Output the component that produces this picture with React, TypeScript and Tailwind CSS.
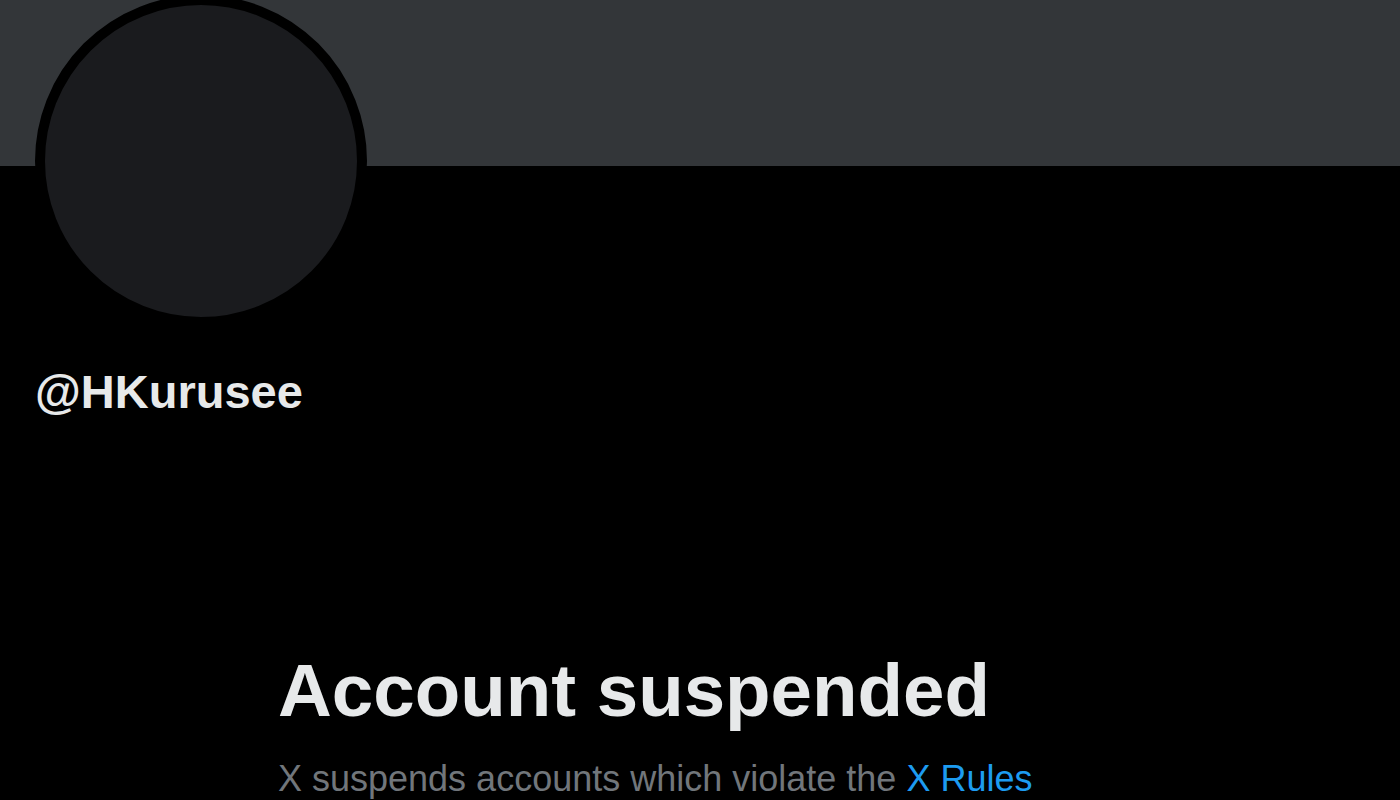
export default function App() {
  return (
    <div className="w-[1400px] h-[800px] overflow-hidden bg-black font-['Liberation_Sans',Arial,sans-serif]">
      <div className="h-[166px] bg-[#333639]" />
      <div className="pl-[35px]">
        <div className="-mt-[171px] w-[332px] h-[332px] rounded-full border-[10px] border-black bg-[#1a1b1e]" />
        <div className="mt-[41px] leading-none text-[47px] font-bold text-[#e7e9ea]">@HKurusee</div>
      </div>
      <div className="pl-[278px] mt-[239px]">
        <h1 className="leading-none text-[74.5px] font-bold text-[#e7e9ea]">Account suspended</h1>
        <p className="mt-[32px] leading-none text-[36px] text-[#71767b]">
          X suspends accounts which violate the <span className="text-[#1d9bf0]">X Rules</span>
        </p>
      </div>
    </div>
  );
}
